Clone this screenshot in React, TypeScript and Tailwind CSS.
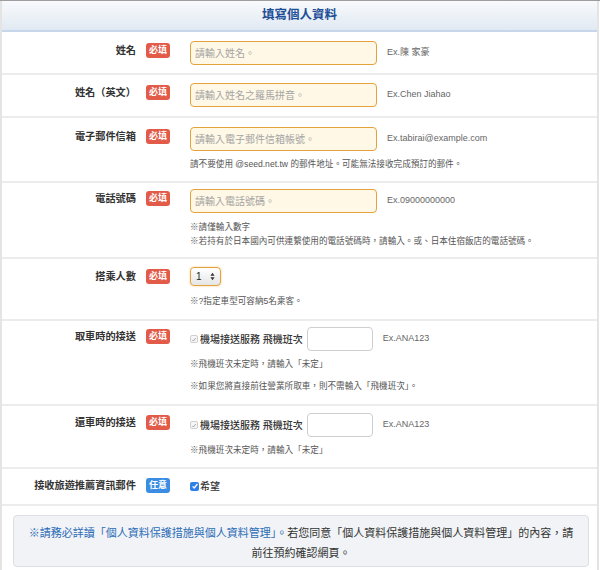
import type { ReactNode } from "react";

const Badge = ({ optional = false }: { optional?: boolean }) => (
  <span
    className={`flex h-[15px] w-[24px] shrink-0 items-center justify-center rounded-[3px] text-[9px] font-bold leading-none text-white ${
      optional ? "bg-[#3a8de2]" : "bg-[#e25b48]"
    }`}
  >
    {optional ? "任意" : "必填"}
  </span>
);

const Row = ({
  label,
  optional = false,
  className,
  children,
}: {
  label: string;
  optional?: boolean;
  className: string;
  children: ReactNode;
}) => (
  <div className={`flex border-b-2 border-[#ececec] ${className}`}>
    <div className="w-[134px] shrink-0 text-right text-[10.2px] font-bold leading-[20px] text-[#333]">
      {label}
    </div>
    <div className="ml-[10px] flex pt-[2px]">
      <Badge optional={optional} />
    </div>
    <div className="ml-[20px] flex flex-col">{children}</div>
  </div>
);

const TextField = ({ placeholder, example }: { placeholder: string; example: string }) => (
  <div className="flex items-center">
    <input
      placeholder={placeholder}
      className="h-[24px] w-[187px] rounded-[4px] border border-[#e4a23c] bg-[#fff8e6] px-[4px] text-[10px] outline-none placeholder:text-[#a4a4a4]"
    />
    <span className="ml-[10px] text-[9px] text-[#666]">{example}</span>
  </div>
);

const Note = ({ children, className = "" }: { children: ReactNode; className?: string }) => (
  <p className={`text-[8.6px] leading-[14px] text-[#555] ${className}`}>{children}</p>
);

const GrayCheck = () => (
  <span className="mr-[2px] inline-flex h-[8px] w-[8px] items-center justify-center rounded-[2px] border border-[#cfcfcf] bg-[#f6f6f6]">
    <svg viewBox="0 0 10 10" className="h-[7px] w-[7px]">
      <path d="M2 5.5 L4 7.5 L8 2.5" fill="none" stroke="#888" strokeWidth="1.2" />
    </svg>
  </span>
);

const Transfer = () => (
  <div className="flex items-center">
    <GrayCheck />
    <span className="text-[10px] font-medium text-[#333]">機場接送服務 飛機班次</span>
    <input className="ml-[4px] h-[24px] w-[66px] rounded-[4px] border border-[#cfcfcf] bg-white outline-none" />
    <span className="ml-[10px] text-[9px] text-[#666]">Ex.ANA123</span>
  </div>
);

export default function App() {
  return (
    <div className="min-h-[570px] w-[600px] bg-white font-['Liberation_Sans','Noto_Sans_CJK_TC',sans-serif]">
      <div className="h-px w-full bg-[#9d9d9d]" />
      <div className="w-[599px] border-x-2 border-[#e4e4e4] pb-[8px]">
        {/* Header */}
        <div className="flex h-[31px] items-center justify-center border-b-2 border-[#c6d7ec] bg-gradient-to-b from-[#f8fafc] to-[#e1e9f2]">
          <h1 className="text-[12.5px] font-bold text-[#1e4f97]">填寫個人資料</h1>
        </div>

        <Row label="姓名" className="pt-[9px] pb-[8px]">
          <TextField placeholder="請輸入姓名。" example="Ex.陳 家豪" />
        </Row>

        <Row label="姓名（英文）" className="pt-[8px] pb-[9px]">
          <TextField placeholder="請輸入姓名之羅馬拼音。" example="Ex.Chen Jiahao" />
        </Row>

        <Row label="電子郵件信箱" className="pt-[9px] pb-[10px]">
          <TextField placeholder="請輸入電子郵件信箱帳號。" example="Ex.tabirai@example.com" />
          <Note className="mt-[6px]">請不要使用 @seed.net.tw 的郵件地址。可能無法接收完成預訂的郵件。</Note>
        </Row>

        <Row label="電話號碼" className="pt-[6px] pb-[9px]">
          <TextField placeholder="請輸入電話號碼。" example="Ex.09000000000" />
          <Note className="mt-[7px]">※請僅輸入數字</Note>
          <Note>※若持有於日本國內可供連繫使用的電話號碼時，請輸入。或、日本住宿飯店的電話號碼。</Note>
        </Row>

        <Row label="搭乘人數" className="pt-[8px] pb-[11px]">
          <div className="flex h-[19px] w-[31px] items-center justify-between rounded-[4px] border border-[#e4a23c] bg-gradient-to-b from-white to-[#e6e6e6] px-[5px] shadow-[0_0_2px_#f2c27a]">
            <span className="text-[10px] text-[#222]">1</span>
            <svg viewBox="0 0 6 10" className="h-[9px] w-[5px]">
              <path d="M3 0.5 L5.5 4 L0.5 4 Z M3 9.5 L5.5 6 L0.5 6 Z" fill="#333" />
            </svg>
          </div>
          <Note className="mt-[8px]">※?指定車型可容納5名乘客。</Note>
        </Row>

        <Row label="取車時的接送" className="pt-[6px] pb-[11px]">
          <Transfer />
          <Note className="mt-[6px]">※飛機班次未定時，請輸入「未定」</Note>
          <Note className="mt-[8px]">※如果您將直接前往營業所取車，則不需輸入「飛機班次」。</Note>
        </Row>

        <Row label="還車時的接送" className="pt-[7px] pb-[10px]">
          <Transfer />
          <Note className="mt-[6px]">※飛機班次未定時，請輸入「未定」</Note>
        </Row>

        <Row label="接收旅遊推薦資訊郵件" optional className="pt-[7px] pb-[8px]">
          <div className="flex h-[20px] items-center">
            <span className="mr-[1px] inline-flex h-[9px] w-[9px] items-center justify-center rounded-[2px] bg-[#2f80e6]">
              <svg viewBox="0 0 10 10" className="h-[8px] w-[8px]">
                <path d="M2 5.5 L4 7.5 L8 2.5" fill="none" stroke="#fff" strokeWidth="1.6" />
              </svg>
            </span>
            <span className="text-[10px] font-medium text-[#333]">希望</span>
          </div>
        </Row>

        {/* Notice */}
        <div className="ml-[11px] mr-[8px] mt-[9px] rounded-[4px] border border-[#dcdfe3] bg-[#f1f3f6] pt-[7px] pb-[3px] text-center text-[11px] leading-[20px] text-[#333]">
          <span className="text-[#2c6cb7]">※請務必詳讀「個人資料保護措施與個人資料管理」。</span>
          若您同意「個人資料保護措施與個人資料管理」的內容，請
          <br />
          前往預約確認網頁。
        </div>
      </div>
    </div>
  );
}
